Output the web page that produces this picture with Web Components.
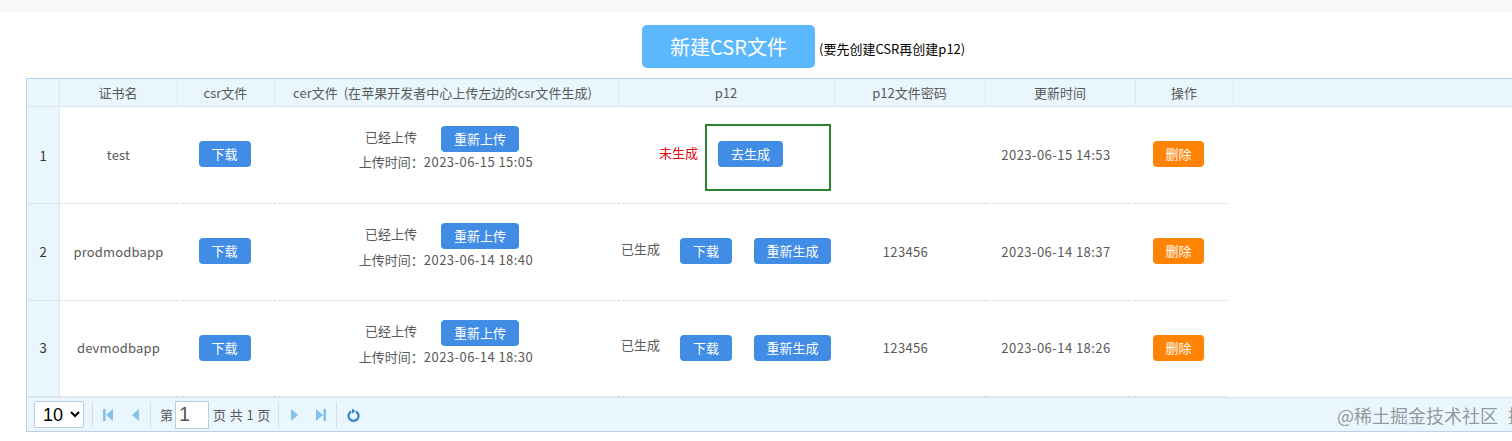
<!DOCTYPE html>
<html lang="zh">
<head>
<meta charset="utf-8">
<title>证书管理</title>
<style>
html, body { margin: 0; background: #fff; overflow: hidden; }
body { width: 1512px; height: 441px; font-family: "Liberation Sans", "Noto Sans CJK SC", sans-serif; }
</style>
</head>
<body>
<cert-page></cert-page>
<script>
// small blue / orange button used all over the grid
class UiBtn extends HTMLElement {
  constructor() {
    super();
    this.attachShadow({ mode: "open" });
    this.shadowRoot.innerHTML = `
<style>
:host { display: inline-block; flex: none; }
button {
  display: block;
  height: 26px;
  width: var(--w, 52px);
  padding: 0;
  border: 0;
  border-radius: 4px;
  background: #418ce4;
  color: #fff;
  font: 13px "Noto Sans CJK SC", sans-serif;
  line-height: 26px;
}
:host([kind="danger"]) button { background: #ff8305; }
</style>
<button><slot></slot></button>`;
  }
}
customElements.define("ui-btn", UiBtn);

// top strip + create button row
class CsrToolbar extends HTMLElement {
  constructor() {
    super();
    this.attachShadow({ mode: "open" });
    this.shadowRoot.innerHTML = `
<style>
:host { display: block; }
.strip { height: 12px; background: #f8f8f8; }
.row { display: flex; align-items: center; height: 66px; padding: 0 0 0 642px; box-sizing: border-box; }
.row button {
  width: 173px;
  height: 43px;
  margin-top: 3px;
  border: 0;
  border-radius: 5px;
  background: #5cb8fd;
  color: #fff;
  font: 20px "Noto Sans CJK SC", sans-serif;
  padding: 0;
}
.tip { margin: 6px 0 0 4px; font: 13px "Noto Sans CJK SC", sans-serif; color: #000; }
</style>
<div class="strip"></div>
<div class="row">
  <button>新建CSR文件</button>
  <span class="tip">(要先创建CSR再创建p12)</span>
</div>`;
  }
}
customElements.define("csr-toolbar", CsrToolbar);

const gridCols = "32px 118px 97px 344px 216px 151px 150px 98px 1fr";
const rowCols = "33px 117px 97px 344px 216px 151px 150px 93px 1fr";

class GridHead extends HTMLElement {
  constructor() {
    super();
    this.attachShadow({ mode: "open" });
    const titles = ["", "证书名", "csr文件", "cer文件&nbsp;&nbsp;(在苹果开发者中心上传左边的csr文件生成)", "p12", "p12文件密码", "更新时间", "操作", ""];
    this.shadowRoot.innerHTML = `
<style>
:host {
  display: grid;
  grid-template-columns: ${gridCols};
  height: 27px;
  background: #e9f6fd;
  border-bottom: 1px solid #d5e6ee;
  color: #595959;
  font: 13px "Noto Sans CJK SC", sans-serif;
}
div { display: flex; align-items: center; justify-content: center; white-space: nowrap; box-sizing: border-box; padding-right: 1px; }
div + div { border-left: 1px solid #d9e9f1; }
.long { padding-right: 8px; letter-spacing: .03px; }
</style>
${titles.map((t, i) => `<div class="${i === 3 ? "long" : ""}">${t}</div>`).join("")}`;
  }
}
customElements.define("grid-head", GridHead);

class CertRow extends HTMLElement {
  constructor() {
    super();
    this.attachShadow({ mode: "open" });
    this.shadowRoot.innerHTML = `
<style>
:host {
  display: grid;
  grid-template-columns: ${rowCols};
  height: var(--h, 97px);
  color: #595959;
  font: 13px "Noto Sans CJK SC", sans-serif;
}
.c { display: flex; align-items: center; justify-content: center; white-space: nowrap; border-bottom: 1px dotted #d2d2d2; box-sizing: border-box; padding-bottom: var(--pad, 0); }
.num { background: #e9f6fd; border-right: 1px solid #d9e9f1; border-bottom: 1px solid #d5e6ee; color: #333; padding-bottom: var(--num-pad, 0); }
.name { letter-spacing: .18px; }
.csr { padding-right: 2px; }
.cer { flex-direction: column; padding-bottom: var(--cer-pad, 10px); gap: var(--cer-gap, 1px); }
.cer .top { display: flex; align-items: center; margin-left: -8px; }
.cer .top span { margin: 0 24px 5px 0; }
.num-text { letter-spacing: .45px; }
.num-text ::slotted(*) { letter-spacing: inherit; }
.pwd { padding-right: 8px; letter-spacing: .35px; }
.upd { padding-right: 8px; letter-spacing: .45px; }
.del { padding-right: 6px; }
</style>
<div class="c num"><slot name="num"></slot></div>
<div class="c name"><slot name="name"></slot></div>
<div class="c csr"><ui-btn>下载</ui-btn></div>
<div class="c cer">
  <div class="top"><span>已经上传</span><ui-btn style="--w:78px">重新上传</ui-btn></div>
  <div class="num-text"><slot name="uploaded"></slot></div>
</div>
<div class="c"><slot name="p12"></slot></div>
<div class="c pwd"><slot name="pwd"></slot></div>
<div class="c upd"><slot name="updated"></slot></div>
<div class="c del"><ui-btn kind="danger" style="--w:51px">删除</ui-btn></div>
<div></div>`;
  }
}
customElements.define("cert-row", CertRow);

// p12 cell, generated or not yet generated
class P12Cell extends HTMLElement {
  constructor() {
    super();
    this.attachShadow({ mode: "open" });
    const done = this.hasAttribute("done");
    this.shadowRoot.innerHTML = `
<style>
:host { display: flex; align-items: center; justify-content: center; }
span { margin: 0 20px 6px 0; }
span.no { color: #e8000b; margin-bottom: 4px; }
.gap { width: 22px; }
.no-done { margin-right: 10px; }
</style>
${done
  ? `<span>已生成</span><ui-btn>下载</ui-btn><div class="gap"></div><ui-btn style="--w:77px">重新生成</ui-btn>`
  : `<span class="no">未生成</span><ui-btn style="--w:65px">去生成</ui-btn><div class="no-done"></div>`}`;
  }
}
customElements.define("p12-cell", P12Cell);

class GridPager extends HTMLElement {
  constructor() {
    super();
    this.attachShadow({ mode: "open" });
    const c = "#86c1ea";
    this.shadowRoot.innerHTML = `
<style>
:host {
  display: flex;
  align-items: center;
  height: 34px;
  padding: 0 0 0 7px;
  background: #e9f6fd;
  border-top: 1px solid #d5e6ee;
  color: #595959;
  font: 13px "Noto Sans CJK SC", sans-serif;
  box-sizing: border-box;
}
select {
  width: 50px;
  height: 27px;
  margin: 0;
  padding: 0 0 0 4px;
  border: 1px solid #b5cfe8;
  border-radius: 2px;
  background: #fff;
  color: #000;
  font: 18px "Liberation Sans", sans-serif;
}
.sep { width: 1px; height: 26px; background: #d3dfe6; }
svg { display: block; flex: none; }
input {
  width: 34px;
  height: 28px;
  box-sizing: border-box;
  margin: 0 4px 0 2px;
  padding: 0 0 0 3px;
  border: 1px solid #b5cfe8;
  background: #fff;
  color: #555;
  font: 20px "Liberation Sans", sans-serif;
}
</style>
<select><option>10</option></select>
<div class="sep" style="margin-left:8px"></div>
<svg style="margin-left:9px" width="12" height="14" viewBox="0 0 12 14"><rect x="1" y="1" width="2.6" height="12" fill="${c}"/><path d="M11 1 4 7l7 6z" fill="${c}"/></svg>
<svg style="margin-left:16px" width="10" height="14" viewBox="0 0 10 14"><path d="M9 1 2 7l7 6z" fill="${c}"/></svg>
<div class="sep" style="margin-left:10px"></div>
<span style="margin-left:9px">第</span>
<input value="1">
<span style="letter-spacing:.4px">页 共 1 页</span>
<div class="sep" style="margin-left:7px"></div>
<svg style="margin-left:11px" width="10" height="14" viewBox="0 0 10 14"><path d="M1 1 8 7l-7 6z" fill="${c}"/></svg>
<svg style="margin-left:15px" width="12" height="14" viewBox="0 0 12 14"><path d="M1 1 8 7l-7 6z" fill="${c}"/><rect x="8.4" y="1" width="2.6" height="12" fill="${c}"/></svg>
<div class="sep" style="margin-left:9px"></div>
<svg style="margin-left:10px" width="13" height="14" viewBox="0 0 13 14"><path d="M4.2 3.4a5 5 0 1 0 4.6 0" fill="none" stroke="#2f86cf" stroke-width="2.2"/><path d="M5 0.6v4.8L8.4 3z" fill="#2f86cf"/></svg>`;
  }
}
customElements.define("grid-pager", GridPager);

class CertGrid extends HTMLElement {
  constructor() {
    super();
    this.attachShadow({ mode: "open" });
    this.shadowRoot.innerHTML = `
<style>
:host {
  display: block;
  margin: 0 -4px 0 26px;
  border: 1px solid #b3d3ea;
  border-bottom-color: #bfcfea;
  position: relative;
}
.wm {
  position: absolute;
  left: 1310px;
  top: 323px;
  color: rgba(90, 90, 90, .62);
  font: 18px "Noto Sans CJK SC", sans-serif;
  white-space: nowrap;
  pointer-events: none;
}
.wm b { font-weight: 400; margin-left: 10px; }
.note {
  position: absolute;
  left: 678px;
  top: 45px;
  width: 126px;
  height: 67px;
  box-sizing: border-box;
  border: 2px solid #2b8231;
  pointer-events: none;
}
</style>
<grid-head></grid-head>
<slot></slot>
<grid-pager></grid-pager>
<div class="note"></div>
<div class="wm">@稀土掘金技术社区<b>掘</b></div>`;
  }
}
customElements.define("cert-grid", CertGrid);

class CertPage extends HTMLElement {
  constructor() {
    super();
    this.attachShadow({ mode: "open" });
    const label = `<span style="letter-spacing:0">上传时间：</span>`;
    this.shadowRoot.innerHTML = `
<style>:host { display: block; }</style>
<csr-toolbar></csr-toolbar>
<cert-grid>
  <cert-row style="--pad:2px;--cer-pad:14px;--cer-gap:0px">
    <span slot="num">1</span><span slot="name">test</span>
    <span slot="uploaded">${label}2023-06-15 15:05</span>
    <p12-cell slot="p12"></p12-cell>
    <span slot="updated">2023-06-15 14:53</span>
  </cert-row>
  <cert-row style="--pad:2px;--num-pad:2px;--cer-pad:12px">
    <span slot="num">2</span><span slot="name">prodmodbapp</span>
    <span slot="uploaded">${label}2023-06-14 18:40</span>
    <p12-cell slot="p12" done></p12-cell>
    <span slot="pwd">123456</span><span slot="updated">2023-06-14 18:37</span>
  </cert-row>
  <cert-row style="--h:96px;--pad:2px;--num-pad:2px;--cer-pad:11px">
    <span slot="num">3</span><span slot="name">devmodbapp</span>
    <span slot="uploaded">${label}2023-06-14 18:30</span>
    <p12-cell slot="p12" done></p12-cell>
    <span slot="pwd">123456</span><span slot="updated">2023-06-14 18:26</span>
  </cert-row>
</cert-grid>`;
  }
}
customElements.define("cert-page", CertPage);
</script>
</body>
</html>
